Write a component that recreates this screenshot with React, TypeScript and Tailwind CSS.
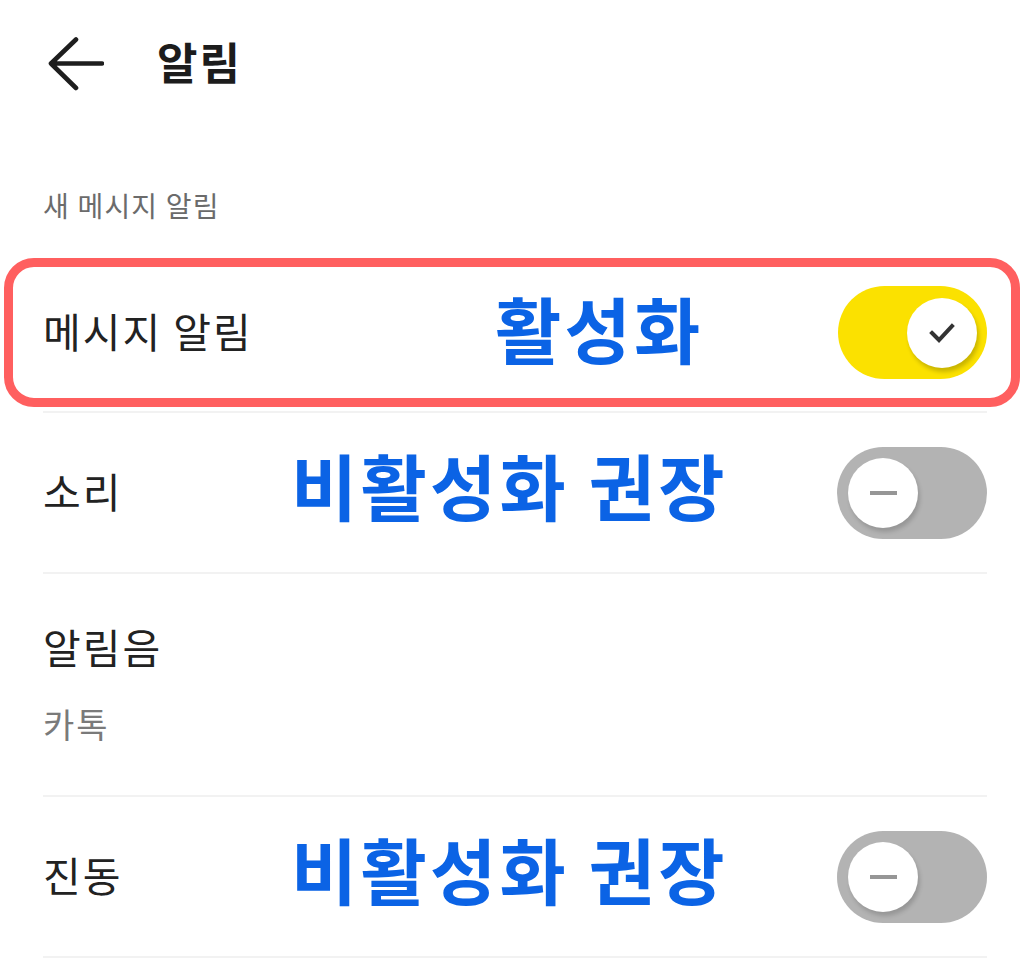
import React from "react";

const font = { fontFamily: '"Noto Sans CJK KR", "Noto Sans", sans-serif' };

function ToggleOn() {
  return (
    <div className="relative flex h-[93px] w-[149px] shrink-0 items-center justify-end rounded-full bg-[#fbe100] pr-[10px]">
      <div className="flex h-[70px] w-[70px] items-center justify-center rounded-full bg-white shadow-[2px_4px_4px_rgba(0,0,0,0.2)]">
        <svg width="32" height="24" viewBox="0 0 32 24">
          <path d="M6 12 L13 19 L26 5" fill="none" stroke="#333333" strokeWidth="4" strokeLinecap="square" />
        </svg>
      </div>
    </div>
  );
}

function ToggleOff() {
  return (
    <div className="relative flex h-[92px] w-[150px] shrink-0 items-center justify-start rounded-full bg-[#b3b3b3] pl-[11px]">
      <div className="flex h-[70px] w-[70px] items-center justify-center rounded-full bg-white shadow-[2px_4px_4px_rgba(0,0,0,0.16)]">
        <div className="h-[4px] w-[27px] bg-[#969696]" />
      </div>
    </div>
  );
}

function Divider() {
  return <div className="ml-[43px] mr-[37px] h-[2px] bg-[#f2f2f2]" />;
}

export default function App() {
  return (
    <div className="relative h-[980px] w-[1024px] overflow-hidden bg-white text-[#222222]" style={font}>
      {/* header */}
      <div className="flex h-[128px] items-center pl-[48px]">
        <svg width="56" height="54" viewBox="0 0 56 54" className="shrink-0">
          <path d="M3 26.5 L54 26.5 M28 2.5 L3 26.5 L28 51" fill="none" stroke="#1e1e1e" strokeWidth="4.6" strokeLinecap="round" strokeLinejoin="round" />
        </svg>
        <span className="ml-[53px] pb-[6px] text-[44px] font-bold leading-none tracking-[2px] text-[#1c1c1c]">알림</span>
      </div>

      {/* section label */}
      <div className="h-[130px] pl-[43px] pt-[63px]">
        <span className="text-[28px] leading-[28px] tracking-[1.2px] text-[#6b6b6b]">새 메시지 알림</span>
      </div>

      {/* row 1 highlighted */}
      <div className="relative mx-[4px] flex h-[149px] items-center justify-between rounded-[30px] border-[9px] border-[#ff5f5f] pl-[30px] pr-[24px]">
        <span className="pb-[5px] text-[41px] leading-none tracking-[2px]">메시지 알림</span>
        <span className="absolute left-[482px] top-[24px] text-[72px] font-bold leading-none tracking-[3.3px] text-[#0b63e5]">활성화</span>
        <ToggleOn />
      </div>
      <div className="h-[4px]" />
      <Divider />

      {/* row 2 */}
      <div className="relative flex h-[159px] items-center justify-between pl-[43px] pr-[37px]">
        <span className="pb-[5px] text-[41px] leading-none tracking-[2px]">소리</span>
        <span className="absolute left-[291px] top-[35px] text-[72px] font-bold leading-none tracking-[3.3px] text-[#0b63e5]">비활성화 권장</span>
        <ToggleOff />
      </div>
      <Divider />

      {/* row 3 */}
      <div className="flex h-[221px] flex-col pl-[43px] pt-[52px]">
        <span className="text-[41px] leading-[41px] tracking-[2px]">알림음</span>
        <span className="mt-[40px] text-[34px] leading-[34px] tracking-[2px] text-[#7a7a7a]">카톡</span>
      </div>
      <Divider />

      {/* row 4 */}
      <div className="relative flex h-[159px] items-center justify-between pl-[43px] pr-[37px]">
        <span className="pb-[5px] text-[41px] leading-none tracking-[2px]">진동</span>
        <span className="absolute left-[291px] top-[35px] text-[72px] font-bold leading-none tracking-[3.3px] text-[#0b63e5]">비활성화 권장</span>
        <ToggleOff />
      </div>
      <Divider />
    </div>
  );
}
